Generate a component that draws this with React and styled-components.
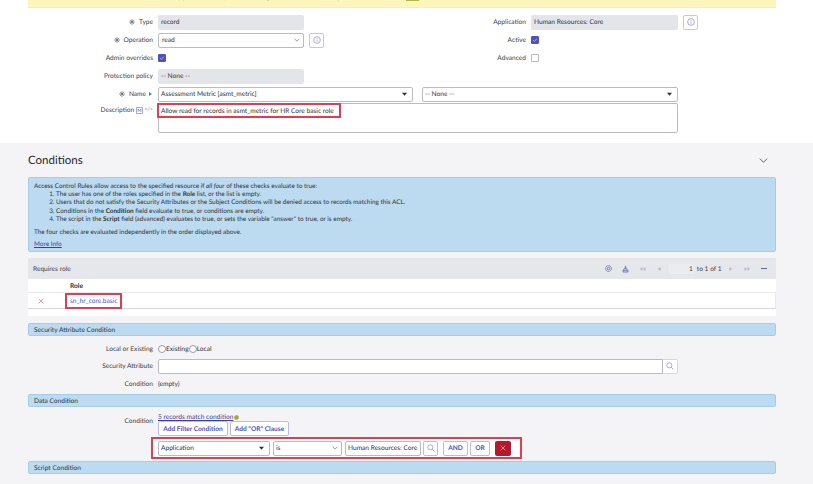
import React from "react";
import styled, { createGlobalStyle } from "styled-components";

const GlobalStyle = createGlobalStyle`
  html, body {
    margin: 0;
    padding: 0;
    background: #f4f4f6;
  }
  body {
    width: 813px;
    height: 484px;
    overflow: hidden;
    font-family: "Lato", "Liberation Sans", sans-serif;
    font-size: 6.6px;
    text-rendering: geometricPrecision;
    color: #2e3238;
  }
`;

const INDIGO = "#4f52bd";
const RED = "#e63a4e";

function InfoIcon() {
  return (
    <svg width="8" height="8" viewBox="0 0 12 12" fill="none" stroke="#7f82d0" strokeWidth="1">
      <circle cx="6" cy="6" r="5" />
      <path d="M6 5.4v3.2M6 3.2v1" />
    </svg>
  );
}

function Check() {
  return (
    <svg width="8" height="8" viewBox="0 0 10 10" fill="none" stroke="#dfe0f5" strokeWidth="1">
      <path d="M2 5.4l2.1 2L8 2.8" />
    </svg>
  );
}

const CaretSvg = styled.svg`
  margin-right: 2px;
  flex-shrink: 0;
`;

function Caret() {
  return (
    <CaretSvg width="5" height="4" viewBox="0 0 6 4" fill="#2e3238">
      <path d="M0 .5h6L3 4z" />
    </CaretSvg>
  );
}

function Chevron({ size = 6, color = "#555a62", width = 1 }) {
  return (
    <svg width={size} height={size} viewBox="0 0 10 10" fill="none" stroke={color} strokeWidth={width}>
      <path d="M1 3l4 4 4-4" />
    </svg>
  );
}

function Magnifier() {
  return (
    <svg width="8" height="8" viewBox="0 0 12 12" fill="none" stroke="#7f82d0" strokeWidth="1">
      <circle cx="5" cy="5" r="3.8" />
      <path d="M8 8l3.2 3.2" />
    </svg>
  );
}

function Cross({ color, size = 7 }) {
  return (
    <svg width={size} height={size} viewBox="0 0 10 10" fill="none" stroke={color} strokeWidth="1.1">
      <path d="M1 1l8 8M9 1l-8 8" />
    </svg>
  );
}

const RequiredSvg = styled.svg`
  margin-right: 3px;
  flex-shrink: 0;
`;

function Required() {
  return (
    <RequiredSvg width="6" height="6" viewBox="0 0 10 10" fill="none" stroke="#5a5e66" strokeWidth="1.1">
      <path d="M5 0v10M0 5h10M1.5 1.5l7 7M8.5 1.5l-7 7" />
    </RequiredSvg>
  );
}

function Pager({ dir, double }) {
  const flip = dir === "left" ? "scale(-1 1) translate(-10 0)" : undefined;
  return (
    <svg width="7" height="6" viewBox="0 0 10 10" fill="#b9bac9">
      <g transform={flip}>
        <path d={double ? "M0 1.5l4.5 3.5L0 8.5zM5 1.5l4.5 3.5L5 8.5z" : "M3 1.5L8 5l-5 3.5z"} />
      </g>
    </svg>
  );
}

function GearIcon() {
  return (
    <svg width="7" height="7" viewBox="0 0 10 10" fill="none" stroke="#6366ad" strokeWidth="1.2">
      <circle cx="5" cy="5" r="4.2" strokeDasharray="2 .5" />
      <circle cx="5" cy="5" r="1.8" />
    </svg>
  );
}

function PersonalizeIcon() {
  return (
    <svg width="7" height="8" viewBox="0 0 10 10" fill="none" stroke="#6366ad" strokeWidth="1.2">
      <path d="M5 .5v4M3.6 3.8h2.8L8 7H2zM1.5 7v2.3h7V7" />
    </svg>
  );
}

const Page = styled.div`
  width: 813px;
  height: 484px;
  overflow: hidden;
`;

const TopPanel = styled.div`
  background: #fff;
  height: 143px;
  padding: 0 37px 0 28px;
`;

const Banner = styled.div`
  height: 7px;
  background: #fcf6bd;
  border-bottom: 1px solid #f6f0ad;
  margin-bottom: 5px;
  overflow: hidden;
  padding-left: 10px;
  line-height: 8px;
  color: #6b684c;
  white-space: nowrap;
  font-size: 7px;
`;

const BannerText = styled.div`
  margin-top: -7px;
`;

const BannerTag = styled.span`
  display: inline-block;
  vertical-align: top;
  width: 13px;
  height: 8px;
  background: #bcb04e;
  margin-left: 5px;
`;

const FormGrid = styled.div`
  display: grid;
  grid-template-columns: 374px 374px;
`;

const FormColumn = styled.div`
  display: flex;
  flex-direction: column;
`;

const Row = styled.div`
  display: flex;
  align-items: center;
  height: ${(p) => p.$height || 18}px;
  flex-shrink: 0;
`;

const Label = styled.div`
  width: ${(p) => p.$width}px;
  flex-shrink: 0;
  padding-right: 5px;
  box-sizing: border-box;
  color: #3d4148;
  white-space: nowrap;
  display: flex;
  justify-content: flex-end;
  align-items: center;
  gap: 1px;
`;

const NameMark = styled.span`
  width: 0;
  height: 0;
  margin: 0 1px 0 2px;
  border-left: 3px solid #3b82d6;
  border-top: 2px solid transparent;
  border-bottom: 2px solid transparent;
`;

const DescriptionLabel = styled(Label)`
  height: 14px;
`;

const DescriptionIcons = styled.span`
  display: inline-flex;
  align-items: center;
  gap: 1px;
  margin-left: 1px;
  color: #6d70c6;
  font-size: 5.5px;
`;

const ReadOnly = styled.div`
  width: ${(p) => p.$width || 146}px;
  height: 15px;
  background: #e4e5e9;
  border-radius: 2px;
  padding-left: 3px;
  box-sizing: border-box;
  display: flex;
  align-items: center;
`;

const SelectBox = styled.div`
  width: ${(p) => p.$width}px;
  height: 15px;
  flex-shrink: 0;
  background: #fff;
  border: 1px solid #b9bbc2;
  border-radius: 2px;
  padding: 0 ${(p) => p.$right || 3}px 0 ${(p) => p.$left || 2}px;
  box-sizing: border-box;
  display: flex;
  align-items: center;
  justify-content: space-between;
`;

const InfoButton = styled.div`
  width: 15px;
  height: 15px;
  margin-left: 5px;
  border: 1px solid #c4c5ee;
  border-radius: 2px;
  box-sizing: border-box;
  background: #fff;
  display: flex;
  align-items: center;
  justify-content: center;
`;

const CheckBox = styled.div`
  width: 8px;
  height: 8px;
  border-radius: 1px;
  box-sizing: border-box;
  background: ${(p) => (p.$checked ? INDIGO : "#fff")};
  border: 1px solid ${(p) => (p.$checked ? INDIGO : "#b9bbc2")};
  display: flex;
  align-items: center;
  justify-content: center;
`;

const NameSelects = styled.div`
  display: flex;
  gap: 9px;
`;

const DescriptionRow = styled.div`
  display: flex;
  height: 30px;
`;

const TextBox = styled.div`
  position: relative;
  width: 520px;
  height: 30px;
  background: #fff;
  border: 1px solid #b9bbc2;
  border-radius: 2px;
  box-sizing: border-box;
  padding: 3px 2px;
  line-height: 8px;
`;

const Highlight = styled.div`
  position: absolute;
  left: -2px;
  top: -1px;
  width: 184px;
  height: 15px;
  border: 2px solid ${RED};
  box-sizing: border-box;
`;

const Conditions = styled.div`
  padding: 0 37px 0 28px;
`;

const HeadingRow = styled.div`
  display: flex;
  align-items: center;
  justify-content: space-between;
  height: 34px;
  padding-right: 8px;
`;

const Heading = styled.h2`
  margin: 0;
  font-size: 11.5px;
  font-weight: 400;
  color: #23262b;
`;

const InfoBox = styled.div`
  background: #bcdbf0;
  border: 1px solid #a6cde8;
  border-radius: 2px;
  height: 75px;
  box-sizing: border-box;
  padding: 5px 5px 0;
  font-size: 6.4px;
  line-height: 8.2px;
  color: #2e3238;
`;

const InfoList = styled.ol`
  margin: 0 0 5px;
  padding-left: 22px;
`;

const InfoLine = styled.div`
  margin-bottom: ${(p) => p.$gap || 0}px;
`;

const MoreInfo = styled.a`
  color: #3b3f9e;
  text-decoration: underline;
`;

const RelatedList = styled.div`
  margin-top: 6px;
  background: #fff;
  height: 58px;
`;

const RelatedHeader = styled.div`
  height: 21px;
  background: #e6e7eb;
  display: flex;
  align-items: center;
  justify-content: space-between;
  padding: 0 9px 0 5px;
  color: #3d4148;
`;

const Pagination = styled.div`
  display: flex;
  align-items: center;
  gap: 10px;
`;

const PageGroup = styled.div`
  display: flex;
  align-items: center;
  gap: 2px;
  margin: 0 -4.5px 0 -4px;
`;

const PageInput = styled.div`
  width: 26px;
  height: 10px;
  background: #ebecef;
  text-align: right;
  line-height: 10px;
  padding-right: 2px;
  box-sizing: border-box;
`;

const PageText = styled.span`
  white-space: nowrap;
`;

const Minus = styled.span`
  width: 6px;
  height: 1px;
  background: #6366ad;
`;

const RoleHeader = styled.div`
  height: 14px;
  display: flex;
  align-items: center;
  padding: 1px 0 0 42px;
  font-weight: 700;
  border-bottom: 1px solid #e8e9ec;
  box-sizing: border-box;
`;

const RoleRow = styled.div`
  height: 16px;
  display: flex;
  align-items: center;
  border-bottom: 1px solid #d5d6da;
  border-right: 1px solid #e8e9ec;
  box-sizing: border-box;
`;

const RemoveCell = styled.div`
  width: 42px;
  padding-left: 10px;
  box-sizing: border-box;
  display: flex;
`;

const RoleLink = styled.div`
  color: #4a55d4;
  position: relative;
  white-space: nowrap;
`;

const RoleHighlight = styled.div`
  position: absolute;
  left: -5px;
  right: -5px;
  top: -4px;
  bottom: -4px;
  border: 2px solid ${RED};
`;

const SectionBar = styled.div`
  height: 13px;
  margin-top: ${(p) => p.$top || 0}px;
  background: #bcdbf0;
  border: 1px solid #a6cde8;
  border-radius: 2px;
  box-sizing: border-box;
  padding-left: 5px;
  display: flex;
  align-items: center;
  color: #2e3238;
`;

const ConditionRows = styled.div`
  display: flex;
  flex-direction: column;
  margin-top: 4px;
`;

const Radio = styled.span`
  width: 6px;
  height: 6px;
  border: 1px solid #9a9ca4;
  border-radius: 50%;
  background: #fff;
  display: inline-block;
`;

const RadioGroup = styled.div`
  display: flex;
  align-items: center;
`;

const SearchWrap = styled.div`
  display: flex;
  width: 520px;
  height: 15px;
`;

const SearchInput = styled.div`
  flex: 1;
  background: #fff;
  border: 1px solid #b9bbc2;
  border-radius: 2px 0 0 2px;
`;

const SearchButton = styled.div`
  width: 15px;
  background: #fff;
  border: 1px solid #d5d6da;
  border-left: 0;
  border-radius: 0 2px 2px 0;
  box-sizing: border-box;
  display: flex;
  align-items: center;
  justify-content: center;
`;

const DataConditionRow = styled.div`
  display: flex;
  margin-top: 6px;
`;

const DataLabel = styled(Label)`
  height: 16px;
`;

const BuilderColumn = styled.div`
  display: flex;
  flex-direction: column;
  flex: 1;
  min-width: 0;
`;

const RecordsLine = styled.div`
  display: flex;
  align-items: center;
  height: 8px;
`;

const RecordsLink = styled.a`
  color: #3b3f9e;
  text-decoration: underline;
  white-space: nowrap;
`;

const Dot = styled.span`
  width: 5px;
  height: 5px;
  border-radius: 50%;
  background: #8fae3c;
  border: 1px solid #c5b24a;
  box-sizing: border-box;
  margin-left: 1px;
`;

const FilterButtons = styled.div`
  display: flex;
  gap: 2px;
  margin-bottom: 1px;
`;

const OutlineButton = styled.div`
  width: ${(p) => p.$width}px;
  height: 15px;
  border: 1px solid #b9bbea;
  border-radius: 2px;
  box-sizing: border-box;
  background: #fff;
  color: ${INDIGO};
  font-weight: 700;
  display: flex;
  align-items: center;
  justify-content: center;
  white-space: nowrap;
`;

const FilterStrip = styled.div`
  background: #fff;
  height: 22px;
  margin-left: -7px;
  width: 371px;
  border: 2px solid ${RED};
  box-sizing: border-box;
  display: flex;
  align-items: center;
  padding-left: 5px;
`;

const ValueBox = styled(SelectBox)`
  white-space: nowrap;
  margin-left: 3px;
`;

const OperatorBox = styled(SelectBox)`
  margin-left: 3px;
`;

const SquareButton = styled(OutlineButton)`
  margin-left: 2px;
`;

const AndButton = styled(OutlineButton)`
  margin-left: 5px;
`;

const OrButton = styled(OutlineButton)`
  margin-left: 2px;
`;

const DeleteButton = styled.div`
  width: 16px;
  height: 15px;
  margin-left: 5px;
  background: #b3182c;
  border-radius: 2px;
  display: flex;
  align-items: center;
  justify-content: center;
`;

export default function App() {
  return (
    <Page>
      <GlobalStyle />
      <TopPanel>
        <Banner>
          <BannerText>
            This record is in the Human Resources: Core application, but you are editing it from a different scope in current session
            <BannerTag />
          </BannerText>
        </Banner>
        <FormGrid>
          <FormColumn>
            <Row>
              <Label $width={130}><Required />Type</Label>
              <ReadOnly>record</ReadOnly>
            </Row>
            <Row>
              <Label $width={130}><Required />Operation</Label>
              <SelectBox $width={146} $left={3}>read<Chevron /></SelectBox>
              <InfoButton><InfoIcon /></InfoButton>
            </Row>
            <Row>
              <Label $width={130}>Admin overrides</Label>
              <CheckBox $checked><Check /></CheckBox>
            </Row>
            <Row>
              <Label $width={130}>Protection policy</Label>
              <ReadOnly>-- None --</ReadOnly>
            </Row>
          </FormColumn>
          <FormColumn>
            <Row>
              <Label $width={129}>Application</Label>
              <ReadOnly $width={147}>Human Resources: Core</ReadOnly>
              <InfoButton><InfoIcon /></InfoButton>
            </Row>
            <Row>
              <Label $width={129}>Active</Label>
              <CheckBox $checked><Check /></CheckBox>
            </Row>
            <Row>
              <Label $width={129}>Advanced</Label>
              <CheckBox />
            </Row>
          </FormColumn>
        </FormGrid>
        <Row>
          <Label $width={130}><Required />Name<NameMark /></Label>
          <NameSelects>
            <SelectBox $width={255}>Assessment Metric [asmt_metric]<Caret /></SelectBox>
            <SelectBox $width={256}>-- None --<Caret /></SelectBox>
          </NameSelects>
        </Row>
        <DescriptionRow>
          <DescriptionLabel $width={130}>
            Description
            <DescriptionIcons>
              <svg width="7" height="7" viewBox="0 0 10 10" fill="none" stroke="#6d70c6">
                <rect x=".5" y=".5" width="9" height="9" rx="1" />
                <path d="M3 7V3l2 2.5L7 3v4" />
              </svg>
              {"</>"}
            </DescriptionIcons>
          </DescriptionLabel>
          <TextBox>
            Allow read for records in asmt_metric for HR Core basic role
            <Highlight />
          </TextBox>
        </DescriptionRow>
      </TopPanel>

      <Conditions>
        <HeadingRow>
          <Heading>Conditions</Heading>
          <Chevron size={9} color="#4b4f57" />
        </HeadingRow>
        <InfoBox>
          <InfoLine>Access Control Rules allow access to the specified resource if <i>all four</i> of these checks evaluate to true:</InfoLine>
          <InfoList>
            <li>The user has one of the roles specified in the <b>Role</b> list, or the list is empty.</li>
            <li>Users that do not satisfy the Security Attributes or the Subject Conditions will be denied access to records matching this ACL.</li>
            <li>Conditions in the <b>Condition</b> field evaluate to true, or conditions are empty.</li>
            <li>The script in the <b>Script</b> field (advanced) evaluates to true, or sets the variable "answer" to true, or is empty.</li>
          </InfoList>
          <InfoLine $gap={4}>The four checks are evaluated independently in the order displayed above.</InfoLine>
          <MoreInfo>More Info</MoreInfo>
        </InfoBox>

        <RelatedList>
          <RelatedHeader>
            Requires role
            <Pagination>
              <GearIcon />
              <PersonalizeIcon />
              <Pager dir="left" double />
              <Pager dir="left" />
              <PageGroup>
                <PageInput>1</PageInput>
                <PageText>to 1 of 1</PageText>
              </PageGroup>
              <Pager dir="right" />
              <Pager dir="right" double />
              <Minus />
            </Pagination>
          </RelatedHeader>
          <RoleHeader>Role</RoleHeader>
          <RoleRow>
            <RemoveCell><Cross color="#ef6a6a" size={6} /></RemoveCell>
            <RoleLink>
              sn_hr_core.basic
              <RoleHighlight />
            </RoleLink>
          </RoleRow>
        </RelatedList>

        <SectionBar $top={7}>Security Attribute Condition</SectionBar>
        <ConditionRows>
          <Row $height={17.5}>
            <Label $width={130}>Local or Existing</Label>
            <RadioGroup><Radio />Existing<Radio />Local</RadioGroup>
          </Row>
          <Row $height={17.5}>
            <Label $width={130}>Security Attribute</Label>
            <SearchWrap>
              <SearchInput />
              <SearchButton><Magnifier /></SearchButton>
            </SearchWrap>
          </Row>
          <Row>
            <Label $width={130}>Condition</Label>
            (empty)
          </Row>
        </ConditionRows>

        <SectionBar $top={1}>Data Condition</SectionBar>
        <DataConditionRow>
          <DataLabel $width={130}>Condition</DataLabel>
          <BuilderColumn>
            <RecordsLine>
              <RecordsLink>5 records match condition</RecordsLink>
              <Dot />
            </RecordsLine>
            <FilterButtons>
              <OutlineButton $width={70}>Add Filter Condition</OutlineButton>
              <OutlineButton $width={59}>Add "OR" Clause</OutlineButton>
            </FilterButtons>
            <FilterStrip>
              <SelectBox $width={112}>Application<Caret /></SelectBox>
              <OperatorBox $width={69}>is<Chevron /></OperatorBox>
              <ValueBox $width={76}>Human Resources: Core</ValueBox>
              <SquareButton $width={15}><Magnifier /></SquareButton>
              <AndButton $width={25}>AND</AndButton>
              <OrButton $width={20}>OR</OrButton>
              <DeleteButton><Cross color="#f1b9bf" size={6} /></DeleteButton>
            </FilterStrip>
          </BuilderColumn>
        </DataConditionRow>
        <SectionBar $top={2}>Script Condition</SectionBar>
      </Conditions>
    </Page>
  );
}
